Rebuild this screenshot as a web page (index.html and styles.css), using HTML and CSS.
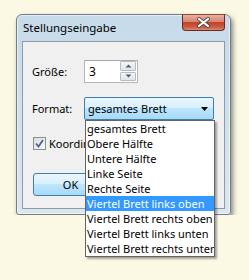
FILE: index.html
```html
<!doctype html>
<html lang="de">
    <head>
        <meta charset="UTF-8" />
        <meta name="viewport" content="width=device-width, initial-scale=1.0" />
        <title>Stellungseingabe</title>
        <link rel="stylesheet" href="styles.css">
    </head>
    <body>
        <div class="window">
            <!-- Title bar -->
            <div class="titlebar">
                <span class="title">Stellungseingabe</span>
                <span class="close">
                    <svg width="41" height="15" viewBox="0 0 41 15">
                        <path d="M16 4 L25 11 M25 4 L16 11" stroke="#4b4b4b" stroke-width="4" stroke-linecap="round" fill="none" />
                        <path d="M16 4 L25 11 M25 4 L16 11" stroke="#fff" stroke-width="2.2" stroke-linecap="round" fill="none" />
                    </svg>
                </span>
            </div>

            <div class="client">
                <div class="field-row">
                    <label class="label" for="size">Größe:</label>
                    <div class="spin">
                        <span class="spin-value" id="size">3</span>
                        <div class="spin-buttons">
                            <span class="spin-btn">
                                <svg width="7" height="4" viewBox="0 0 7 4"><path d="M0.5 3.5 L3.5 0.5 L6.5 3.5 Z" fill="#4a5885" /></svg>
                            </span>
                            <span class="spin-btn">
                                <svg width="7" height="4" viewBox="0 0 7 4"><path d="M0.5 0.5 L3.5 3.5 L6.5 0.5 Z" fill="#4a5885" /></svg>
                            </span>
                        </div>
                    </div>
                </div>

                <div class="field-row format-row">
                    <label class="label" for="format">Format:</label>
                    <div class="combo" id="format">
                        <span>gesamtes Brett</span>
                        <svg class="combo-arrow" width="7" height="4" viewBox="0 0 7 4"><path d="M0 0 L7 0 L3.5 4 Z" fill="#000" /></svg>
                    </div>
                </div>

                <div class="check-row">
                    <span class="checkbox">
                        <svg width="11" height="11" viewBox="0 0 11 11"><path d="M2 5.5 L4.5 8.5 L9 2" stroke="#4a63a0" stroke-width="1.8" fill="none" /></svg>
                    </span>
                    <span>Koordinaten anzeigen</span>
                </div>

                <div class="buttons">
                    <button class="btn btn-default">OK</button>
                    <button class="btn">Abbrechen</button>
                </div>
            </div>
        </div>

        <!-- Open dropdown list of the format combo, a popup over the dialog -->
        <ul class="dropdown">
            <li>gesamtes Brett</li>
            <li>Obere Hälfte</li>
            <li>Untere Hälfte</li>
            <li>Linke Seite</li>
            <li>Rechte Seite</li>
            <li class="selected">Viertel Brett links oben</li>
            <li>Viertel Brett rechts oben</li>
            <li>Viertel Brett links unten</li>
            <li>Viertel Brett rechts unten</li>
        </ul>
    </body>
</html>
```

FILE: styles.css
```css
/* Page */
body {
    margin: 0;
    background-color: #fbf9e4;
    font-family: "Noto Sans", sans-serif;
    font-size: 11px;
    color: #000;
}

/* Vista style dialog frame */
.window {
    box-sizing: border-box;
    width: 215px;
    height: 201px;
    margin: 14px 0 0 16px;
    padding: 0 5px 5px;
    border: 1px solid #717c88;
    border-radius: 6px 6px 3px 3px;
    background: linear-gradient(#c6daea, #d9e7f1);
    box-shadow: 2px 3px 5px rgba(0, 0, 0, 0.45), inset 0 0 0 1px rgba(255, 255, 255, 0.55);
    display: flex;
    flex-direction: column;
}
.titlebar {
    height: 26px;
    display: flex;
    justify-content: space-between;
    align-items: flex-start;
}
.title {
    padding: 5px 0 0 1px;
    line-height: 15px;
    font-size: 11.5px;
}
.close {
    box-sizing: border-box;
    width: 43px;
    height: 17px;
    margin-top: -1px;
    border: 1px solid #6b2b20;
    border-top-color: #8a4a3e;
    border-radius: 0 0 4px 4px;
    background: linear-gradient(#e9b0a2 0%, #d98571 45%, #c0432b 50%, #c95a41 80%, #dc8a6e 100%);
    display: flex;
}

/* Client area */
.client {
    flex: 1;
    padding: 18px 0 0 9px;
    background-color: #f0f0f0;
    border: 1px solid #8e9aa6;
}
.field-row {
    display: flex;
    align-items: center;
}
.label {
    width: 52px;
}
.format-row {
    margin-top: 14px;
}

/* Spin edit */
.spin {
    box-sizing: border-box;
    width: 54px;
    height: 23px;
    border: 1px solid #b3b7bf;
    border-top-color: #a6aab2;
    background-color: #fff;
    display: flex;
}
.spin-value {
    flex: 1;
    padding-left: 4px;
    line-height: 21px;
    font-size: 12px;
}
.spin-buttons {
    display: flex;
    flex-direction: column;
    gap: 1px;
    padding: 0 1px 1px 0;
}
.spin-btn {
    box-sizing: border-box;
    width: 16px;
    height: 10px;
    border: 1px solid #b6bcc6;
    border-radius: 1px;
    background: linear-gradient(#f6f6f6, #e1e3e6);
    display: flex;
    align-items: center;
    justify-content: center;
}

/* Combo box */
.combo {
    box-sizing: border-box;
    width: 130px;
    height: 23px;
    padding: 0 5px 0 3px;
    border: 1px solid #3c7fb1;
    border-radius: 2px;
    background: linear-gradient(#eaf6fd 0%, #d9f0fc 45%, #bee6fd 50%, #a7d9f5 100%);
    display: flex;
    align-items: center;
    justify-content: space-between;
}
.dropdown {
    box-sizing: border-box;
    position: absolute;
    top: 120px;
    left: 85px;
    z-index: 1;
    width: 130px;
    margin: 0;
    padding: 0;
    list-style: none;
    background-color: #fff;
    border: 1px solid #646464;
    box-shadow: 2px 2px 2px rgba(0, 0, 0, 0.35);
}
.dropdown li {
    height: 15px;
    line-height: 15px;
    padding-left: 1px;
    white-space: nowrap;
    overflow: hidden;
}
.dropdown .selected {
    background-color: #3399ff;
    color: #fff;
}

/* Checkbox */
.check-row {
    margin-top: 16px;
    height: 15px;
    display: flex;
    align-items: center;
    white-space: nowrap;
}
.checkbox {
    box-sizing: border-box;
    width: 13px;
    height: 13px;
    margin: 0 3px 0 1px;
    border: 1px solid #8f8f8f;
    background: linear-gradient(135deg, #dcdcdc, #fbfbfb);
    display: flex;
}

/* Buttons */
.buttons {
    margin-top: 22px;
    display: flex;
    gap: 8px;
    padding-left: 1px;
}
.btn {
    box-sizing: border-box;
    width: 75px;
    height: 23px;
    padding: 0;
    font-family: inherit;
    font-size: 11px;
    color: #000;
    border: 1px solid #707070;
    border-radius: 3px;
    background: linear-gradient(#f2f2f2 0%, #ebebeb 45%, #dddddd 50%, #cfcfcf 100%);
}
.btn-default {
    border-color: #3c7fb1;
    background: linear-gradient(#eaf6fd 0%, #d9f0fc 45%, #bee6fd 50%, #a7d9f5 100%);
}
```
